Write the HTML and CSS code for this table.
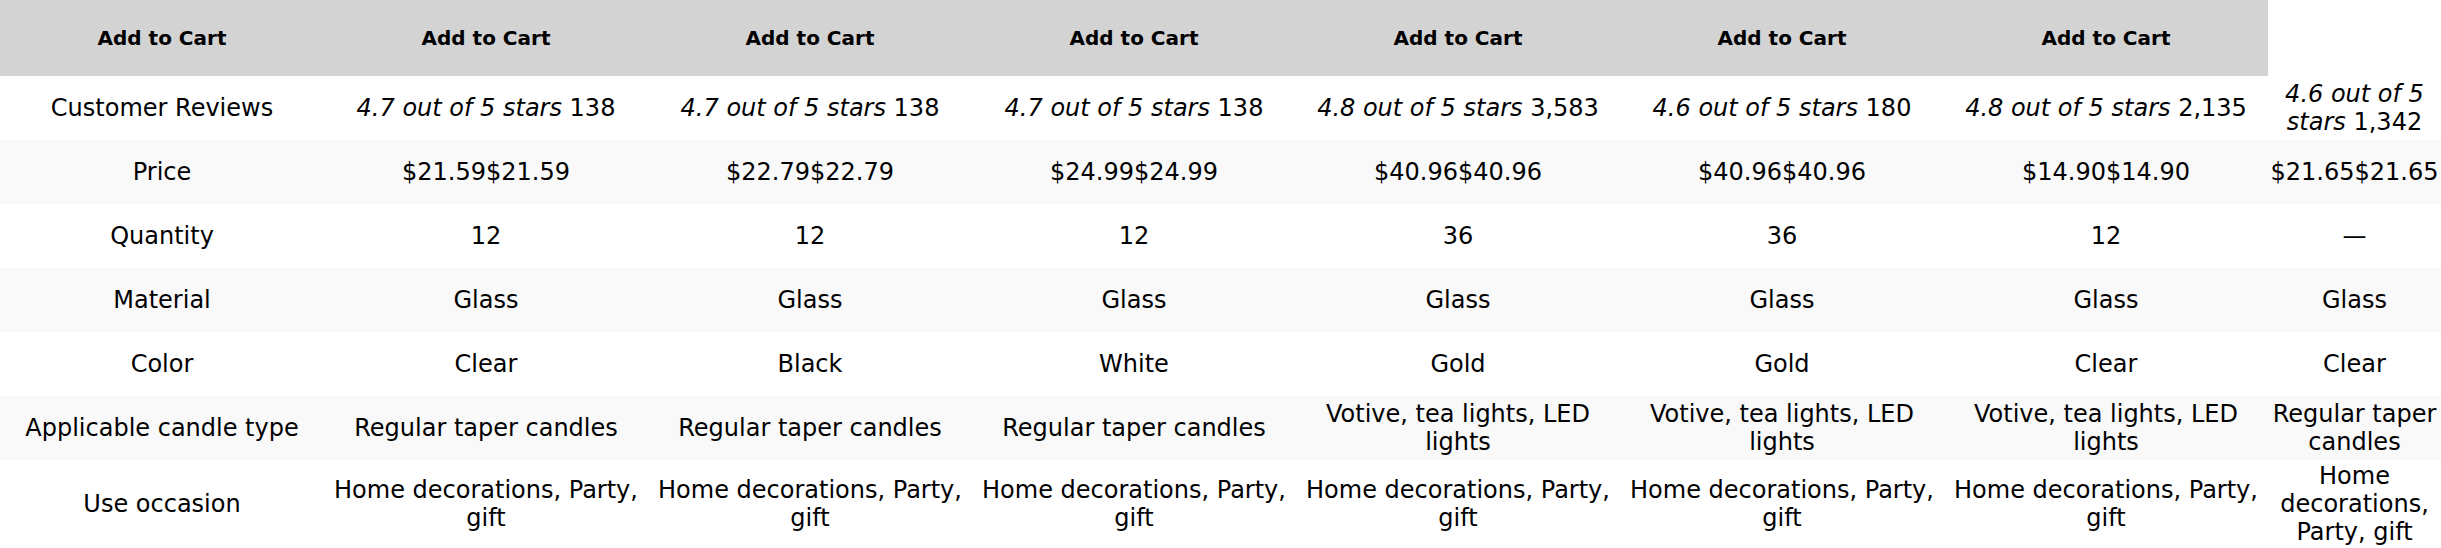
FILE: index.html
```html
<!DOCTYPE html>
<html>
<head>
<meta charset="utf-8">
<link rel="stylesheet" href="styles.css">
</head>
<body>
<table class="compare">
  <colgroup>
    <col class="c"><col class="c"><col class="c"><col class="c"><col class="c"><col class="c"><col class="c"><col class="last">
  </colgroup>
  <thead>
    <tr>
      <th>Add to Cart</th><th>Add to Cart</th><th>Add to Cart</th><th>Add to Cart</th><th>Add to Cart</th><th>Add to Cart</th><th>Add to Cart</th>
    </tr>
  </thead>
  <tbody>
    <tr>
      <td>Customer Reviews</td>
      <td><i>4.7 out of 5 stars</i> 138</td>
      <td><i>4.7 out of 5 stars</i> 138</td>
      <td><i>4.7 out of 5 stars</i> 138</td>
      <td><i>4.8 out of 5 stars</i> 3,583</td>
      <td><i>4.6 out of 5 stars</i> 180</td>
      <td><i>4.8 out of 5 stars</i> 2,135</td>
      <td><i>4.6 out of 5 stars</i> 1,342</td>
    </tr>
    <tr>
      <td>Price</td>
      <td>$21.59$21.59</td>
      <td>$22.79$22.79</td>
      <td>$24.99$24.99</td>
      <td>$40.96$40.96</td>
      <td>$40.96$40.96</td>
      <td>$14.90$14.90</td>
      <td>$21.65$21.65</td>
    </tr>
    <tr>
      <td>Quantity</td>
      <td>12</td><td>12</td><td>12</td><td>36</td><td>36</td><td>12</td><td>—</td>
    </tr>
    <tr>
      <td>Material</td>
      <td>Glass</td><td>Glass</td><td>Glass</td><td>Glass</td><td>Glass</td><td>Glass</td><td>Glass</td>
    </tr>
    <tr>
      <td>Color</td>
      <td>Clear</td><td>Black</td><td>White</td><td>Gold</td><td>Gold</td><td>Clear</td><td>Clear</td>
    </tr>
    <tr>
      <td>Applicable candle type</td>
      <td>Regular taper candles</td>
      <td>Regular taper candles</td>
      <td>Regular taper candles</td>
      <td>Votive, tea lights, LED lights</td>
      <td>Votive, tea lights, LED lights</td>
      <td>Votive, tea lights, LED lights</td>
      <td>Regular taper candles</td>
    </tr>
    <tr>
      <td>Use occasion</td>
      <td>Home decorations, Party, gift</td>
      <td>Home decorations, Party, gift</td>
      <td>Home decorations, Party, gift</td>
      <td>Home decorations, Party, gift</td>
      <td>Home decorations, Party, gift</td>
      <td>Home decorations, Party, gift</td>
      <td>Home decorations, Party, gift</td>
    </tr>
  </tbody>
</table>
</body>
</html>
```

FILE: styles.css
```css
html, body {
  margin: 0;
  padding: 0;
  background: #ffffff;
}

body {
  font-family: "DejaVu Sans", sans-serif;
  color: #000000;
}

.compare {
  border-collapse: collapse;
  border-spacing: 0;
  table-layout: fixed;
  width: 2441px;
}

.compare col.c {
  width: 324px;
}

.compare col.last {
  width: 173px;
}

.compare th {
  background: #d3d3d3;
  font-size: 20px;
  font-weight: bold;
  height: 76px;
  padding: 0 2px;
  box-sizing: border-box;
  text-align: center;
  vertical-align: middle;
}

.compare td {
  font-size: 24px;
  line-height: 28px;
  height: 64px;
  padding: 2px 2px;
  box-sizing: border-box;
  text-align: center;
  vertical-align: middle;
}

.compare tbody tr:nth-child(even) td {
  background: #f9f9f9;
}
```
